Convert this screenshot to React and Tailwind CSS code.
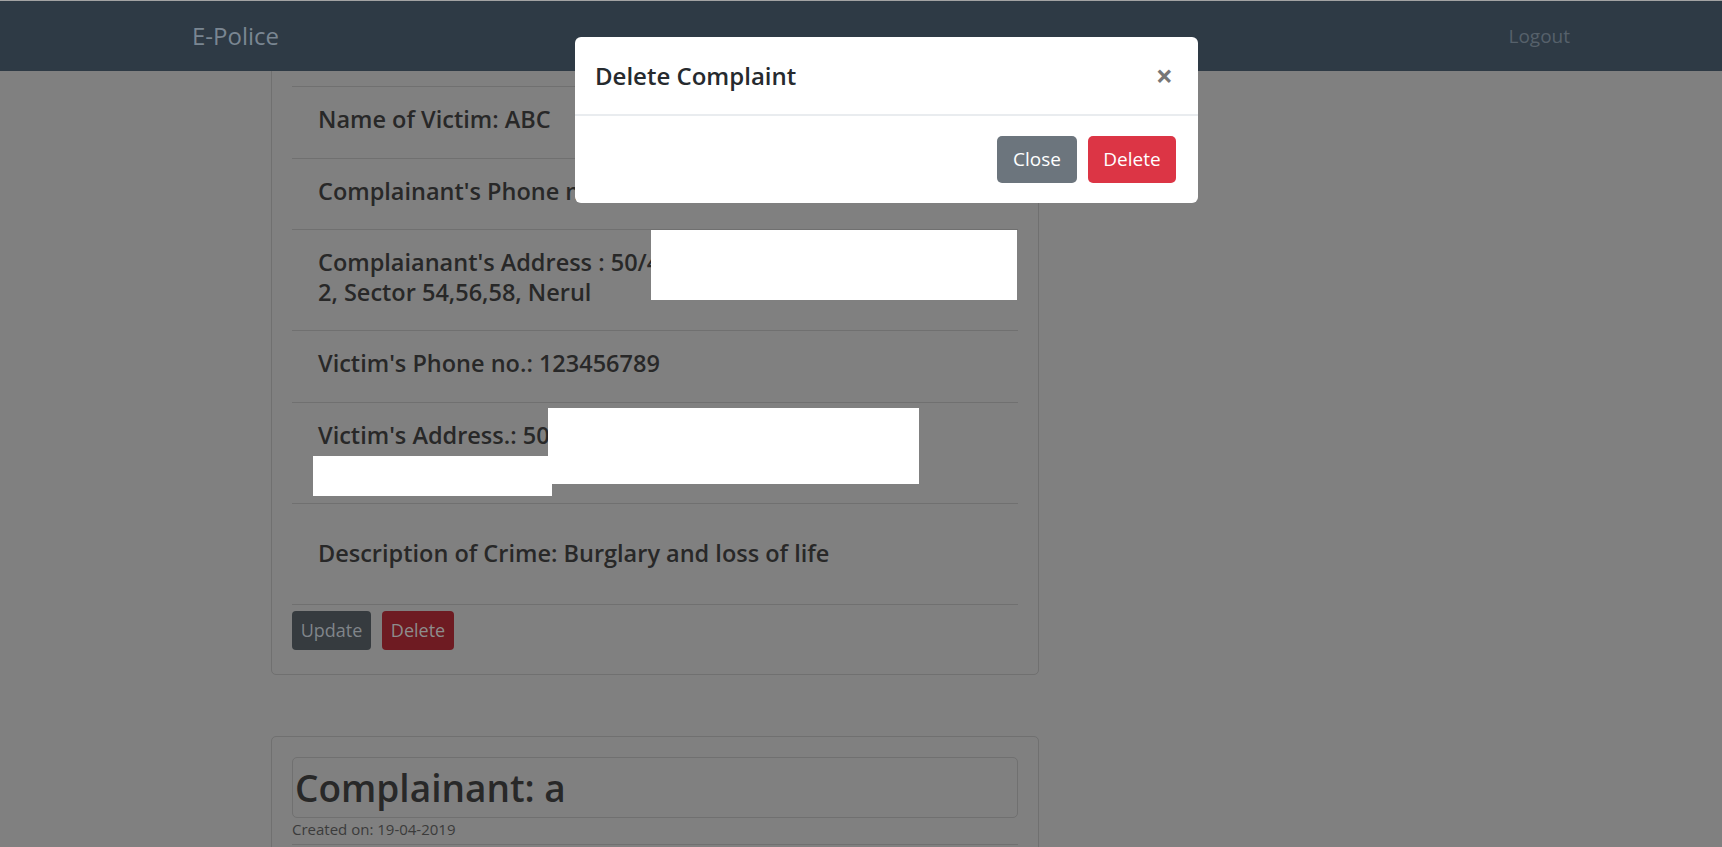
export default function App() {
    const rows = [
        { text: "Location of Crime: Nerul", pad: "pt-[17px] pb-[24px]" },
        { text: "Name of Victim: ABC", pad: "pt-[17px] pb-[24px]" },
        { text: "Complainant's Phone no.: 123456789", pad: "pt-[17px] pb-[23px]" },
        {
            text: (
                <>
                    Complaianant's Address : 50/4
                    <br />
                    2, Sector 54,56,58, Nerul
                </>
            ),
            pad: "pt-[17px] pb-[23px]",
            masks: [<span key="a" className="absolute left-[359px] top-0 w-[366px] h-[70px] bg-white" />],
        },
        { text: "Victim's Phone no.: 123456789", pad: "pt-[17px] pb-[24px]" },
        {
            text: (
                <>
                    Victim's Address.: 50/4
                    <br />
                    2, Sector 54,56,58, Nerul
                </>
            ),
            pad: "pt-[17px] pb-[23px]",
            masks: [
                <span key="a" className="absolute left-[256px] top-[5px] w-[371px] h-[76px] bg-white" />,
                <span key="b" className="absolute left-[21px] top-[53px] w-[239px] h-[40px] bg-white" />,
            ],
        },
        { text: "Description of Crime: Burglary and loss of life", pad: "pt-[34px] pb-[36px]" },
    ];

    return (
        <div className="min-h-screen bg-[#808080] overflow-hidden" style={{ fontFamily: "'Open Sans', Lato, sans-serif" }}>
            <nav className="relative z-10 h-[71px] bg-[#2e3a45] border-t border-[#a3a3a3] flex items-center justify-between pl-[192px] pr-[152px]">
                <span className="text-[24px] text-[#7a8692]">E-Police</span>
                <span className="text-[19px] text-[#56616b]">Logout</span>
            </nav>

            <main className="pl-[271px]">
                <div className="w-[768px] -mt-[57px] border border-[#707070] rounded-[5px] px-[20px] pb-[24px]">
                    <ul className="list-none">
                        {rows.map((row, index) => (
                            <li key={index} className={`relative border-b border-[#707070] pl-[26px] ${row.pad}`}>
                                <p className="text-[23.5px] leading-[30px] font-semibold text-[#282828]">{row.text}</p>
                                {row.masks}
                            </li>
                        ))}
                    </ul>
                    <div className="flex gap-[11px] mt-[6px]">
                        <button className="h-[39px] w-[79px] rounded-[4px] bg-[#363b3f] text-[18px] text-[#80858a]">Update</button>
                        <button className="h-[39px] w-[72px] rounded-[4px] bg-[#6e1b22] text-[18px] text-[#8d8d8d]">Delete</button>
                    </div>
                </div>

                <div className="w-[768px] mt-[61px] border border-[#707070] rounded-[5px] px-[20px] pt-[20px]">
                    <div className="h-[61px] border border-[#707070] rounded-[5px] flex items-center pl-[2px]">
                        <h2 className="text-[37px] font-semibold text-[#282828]">Complainant: a</h2>
                    </div>
                    <div className="text-[15px] text-[#3b3b3b] border-b border-[#707070] pb-[3px]">Created on: 19-04-2019</div>
                    <div className="h-[60px]" />
                </div>
            </main>

            <div className="fixed left-[575px] top-[37px] z-20 w-[623px] bg-white rounded-[6px]">
                <div className="h-[79px] flex items-center justify-between pl-[20px] pr-[25px] border-b-2 border-[#e9ecef]">
                    <h5 className="text-[24px] font-semibold text-[#262a2e]">Delete Complaint</h5>
                    <button className="text-[30px] font-bold leading-none text-[#777777]">×</button>
                </div>
                <div className="flex justify-end gap-[11px] pt-[20px] pb-[20px] pr-[22px]">
                    <button className="h-[47px] w-[80px] rounded-[5px] bg-[#6c757d] text-[19px] text-white">Close</button>
                    <button className="h-[47px] w-[88px] rounded-[5px] bg-[#dc3545] text-[19px] text-white">Delete</button>
                </div>
            </div>
        </div>
    );
}
